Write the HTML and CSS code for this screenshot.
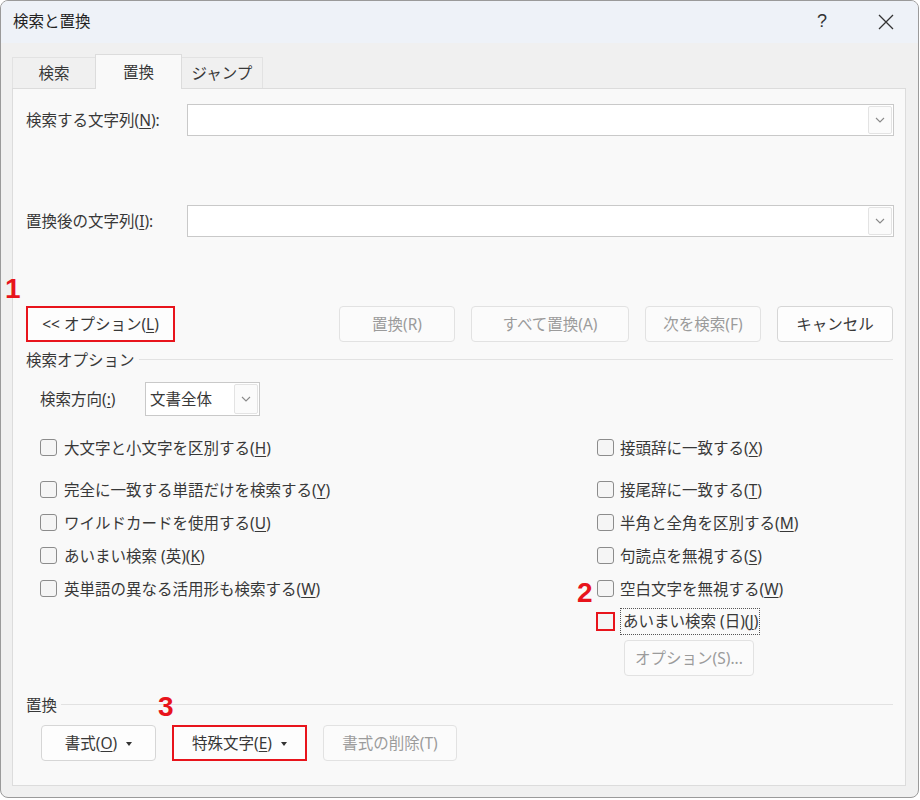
FILE: index.html
```html
<!DOCTYPE html>
<html lang="ja">
<head>
<meta charset="utf-8">
<title>検索と置換</title>
<link rel="stylesheet" href="styles.css">
</head>
<body>
<div class="window">
  <div class="titlebar">
    <span class="title">検索と置換</span>
    <div class="title-actions">
      <span class="help">?</span>
      <svg class="close" width="18" height="18" viewBox="0 0 18 18"><path d="M2 2L16 16M16 2L2 16"/></svg>
    </div>
  </div>
  <div class="tabs">
    <div class="tab tab-1">検索</div>
    <div class="tab tab-2 active">置換</div>
    <div class="tab tab-3">ジャンプ</div>
  </div>
  <div class="panel">
    <div class="field-row">
      <span class="field-label">検索する文字列(<u>N</u>):</span>
      <div class="combo">
        <div class="combo-btn"><svg width="10" height="6" viewBox="0 0 10 6"><path d="M1 1L5 5L9 1"/></svg></div>
      </div>
    </div>
    <div class="field-row row-gap">
      <span class="field-label">置換後の文字列(<u>I</u>):</span>
      <div class="combo">
        <div class="combo-btn"><svg width="10" height="6" viewBox="0 0 10 6"><path d="M1 1L5 5L9 1"/></svg></div>
      </div>
    </div>
    <div class="action-row">
      <button class="btn btn-options marked">&lt;&lt; オプション(<u>L</u>)</button>
      <div class="action-right">
        <button class="btn disabled w116">置換(R)</button>
        <button class="btn disabled w158">すべて置換(A)</button>
        <button class="btn disabled w116">次を検索(F)</button>
        <button class="btn w116">キャンセル</button>
      </div>
    </div>
    <div class="group-title group-options"><span>検索オプション</span><div class="rule"></div></div>
    <div class="dir-row">
      <span class="dir-label">検索方向(<u>:</u>)</span>
      <div class="select">
        <span class="select-text">文書全体</span>
        <div class="combo-btn small"><svg width="10" height="6" viewBox="0 0 10 6"><path d="M1 1L5 5L9 1"/></svg></div>
      </div>
    </div>
    <div class="checks">
      <div class="col col-left">
        <div class="check first"><span class="box"></span><span class="lbl">大文字と小文字を区別する(<u>H</u>)</span></div>
        <div class="check"><span class="box"></span><span class="lbl">完全に一致する単語だけを検索する(<u>Y</u>)</span></div>
        <div class="check"><span class="box"></span><span class="lbl">ワイルドカードを使用する(<u>U</u>)</span></div>
        <div class="check"><span class="box"></span><span class="lbl">あいまい検索 (英)(<u>K</u>)</span></div>
        <div class="check"><span class="box"></span><span class="lbl">英単語の異なる活用形も検索する(<u>W</u>)</span></div>
      </div>
      <div class="col col-right">
        <div class="check first"><span class="box"></span><span class="lbl">接頭辞に一致する(<u>X</u>)</span></div>
        <div class="check"><span class="box"></span><span class="lbl">接尾辞に一致する(<u>T</u>)</span></div>
        <div class="check"><span class="box"></span><span class="lbl">半角と全角を区別する(<u>M</u>)</span></div>
        <div class="check"><span class="box"></span><span class="lbl">句読点を無視する(<u>S</u>)</span></div>
        <div class="check"><span class="box"></span><span class="lbl">空白文字を無視する(<u>W</u>)</span></div>
        <div class="check"><span class="box marked-box"></span><span class="lbl focus">あいまい検索 (日)(<u>J</u>)</span></div>
        <button class="btn disabled sub-btn">オプション(S)...</button>
      </div>
    </div>
    <div class="group-title group-replace"><span>置換</span><div class="rule"></div></div>
    <div class="bottom-row">
      <button class="btn w115">書式(<u>O</u>)<span class="caret"></span></button>
      <button class="btn w135 marked">特殊文字(<u>E</u>)<span class="caret"></span></button>
      <button class="btn disabled w134">書式の削除(T)</button>
    </div>
  </div>
</div>
<span class="anno anno-1">1</span>
<span class="anno anno-2">2</span>
<span class="anno anno-3">3</span>
</body>
</html>
```

FILE: styles.css
```css
* { box-sizing: border-box; }

html, body {
  margin: 0;
  padding: 0;
  background: #ffffff;
}

body {
  position: relative;
  width: 920px;
  height: 800px;
  font-family: "Noto Sans", "Noto Sans CJK JP", sans-serif;
  font-size: 15.5px;
  color: #383838;
}

u { text-decoration: underline; text-underline-offset: 2px; text-decoration-thickness: 1px; }

.window {
  width: 919px;
  height: 798px;
  border: 1px solid #9a9a9a;
  border-radius: 8px;
  background: #f0f0f0;
  overflow: hidden;
}

.titlebar {
  height: 42px;
  background: #eef2f8;
  display: flex;
  align-items: center;
  justify-content: space-between;
  padding-left: 12px;
  padding-right: 23px;
}

.title {
  font-size: 15.5px;
  line-height: 20px;
  color: #222;
  margin-top: -2px;
}

.title-actions {
  display: flex;
  align-items: center;
  gap: 50px;
}

.help {
  font-family: "Liberation Sans", sans-serif;
  font-size: 18px;
  color: #333;
  margin-top: -2px;
}

.close path {
  stroke: #333;
  stroke-width: 1.3;
  fill: none;
}

.tabs {
  display: flex;
  align-items: flex-end;
  margin-top: 11px;
  padding-left: 11px;
  height: 34px;
}

.tab {
  height: 31px;
  display: flex;
  align-items: center;
  justify-content: center;
  background: #f0f0f0;
  border: 1px solid #e2e2e2;
  border-bottom: none;
  font-size: 15.5px;
  line-height: 20px;
}

.tab-1 { width: 83px; border-right: none; }
.tab-2 { width: 87px; }
.tab-3 { width: 81px; border-left: none; }

.tab.active {
  height: 35px;
  background: #f9f9f9;
  border-color: #dcdcdc;
  position: relative;
  z-index: 2;
  margin-bottom: -1px;
  padding-bottom: 1px;
}

.panel {
  position: relative;
  margin-left: 11px;
  width: 894px;
  height: 698px;
  border: 1px solid #dcdcdc;
  background: #f9f9f9;
  padding: 15px 11px 0 13px;
}

.field-row {
  display: flex;
  align-items: center;
  height: 32px;
}

.row-gap { margin-top: 69px; }

.field-label {
  width: 161px;
  line-height: 20px;
}

.combo {
  flex: 1;
  height: 32px;
  background: #ffffff;
  border: 1px solid #c9c9c9;
  display: flex;
  justify-content: flex-end;
  align-items: center;
  padding-right: 1px;
}

.combo-btn {
  width: 24px;
  height: 28px;
  border: 1px solid #e3e3e3;
  border-radius: 2px;
  background: #fbfbfb;
  display: flex;
  align-items: center;
  justify-content: center;
}

.combo-btn path {
  stroke: #8a8a8a;
  stroke-width: 1.1;
  fill: none;
}

.combo-btn.small { height: 30px; }

.action-row {
  margin-top: 69px;
  display: flex;
  justify-content: space-between;
  padding-right: 1px;
}

.action-right {
  display: flex;
  gap: 16px;
}

.btn {
  height: 36px;
  font-family: inherit;
  font-size: 15.5px;
  line-height: 20px;
  color: #383838;
  background: #fdfdfd;
  border: 1px solid #d6d6d6;
  border-radius: 4px;
  padding: 0;
  display: flex;
  align-items: center;
  justify-content: center;
}

.btn.disabled {
  color: #9b9b9b;
  background: #fbfbfb;
  border-color: #e2e2e2;
}

.btn.marked {
  border: 2px solid #e8141c;
  border-radius: 0;
}

.btn-options { width: 149px; }
.w115 { width: 115px; }
.w116 { width: 116px; }
.w134 { width: 134px; }
.w135 { width: 135px; }
.w158 { width: 158px; }

.group-title {
  display: flex;
  align-items: center;
  line-height: 20px;
  height: 20px;
  padding-right: 1px;
}

.group-title .rule {
  flex: 1;
  height: 1px;
  background: #e2e2e2;
  margin-left: 4px;
  margin-top: -2px;
}

.group-options { margin-top: 8px; }
.group-replace { margin-top: 19px; }

.dir-row {
  margin-top: 12px;
  padding-left: 14px;
  display: flex;
  align-items: center;
  height: 34px;
}

.dir-label {
  width: 105px;
  line-height: 20px;
}

.select {
  width: 115px;
  height: 34px;
  background: #ffffff;
  border: 1px solid #c9c9c9;
  display: flex;
  align-items: center;
  justify-content: space-between;
  padding-left: 4px;
  padding-right: 1px;
}

.select-text { line-height: 20px; }

.checks {
  margin-top: 15px;
  padding-left: 14px;
  display: flex;
}

.col {
  display: flex;
  flex-direction: column;
}

.col-left { width: 557px; }

.check {
  height: 33px;
  display: flex;
  align-items: center;
}

.check.first { margin-bottom: 9px; }

.box {
  width: 17px;
  height: 17px;
  border: 1px solid #8c8c8c;
  border-radius: 3px;
  background: #f5f5f5;
  flex: none;
}

.col-left .box { margin-right: 7px; }
.col-right .box { margin-right: 6px; }

.box.marked-box {
  border: 2px solid #e8141c;
  border-radius: 0;
  width: 19px;
  height: 19px;
  margin-left: -1px;
}

.lbl { line-height: 20px; }

.lbl.focus {
  outline: 1px dotted #555;
  outline-offset: 0;
  padding: 2px 1px 2px 2px;
  line-height: 21px;
}

.sub-btn {
  width: 130px;
  margin-top: 2px;
  margin-left: 27px;
}

.bottom-row {
  margin-top: 10px;
  padding-left: 15px;
  display: flex;
  gap: 16px;
}

.caret {
  display: inline-block;
  width: 0;
  height: 0;
  border-left: 3px solid transparent;
  border-right: 3px solid transparent;
  border-top: 4px solid #333;
  margin-left: 9px;
  margin-top: 1px;
}

.anno {
  position: absolute;
  font-family: "Liberation Sans", Arial, sans-serif;
  font-weight: bold;
  font-size: 28px;
  line-height: 28px;
  color: #e8141c;
}

.anno-1 { left: 5px; top: 275px; }
.anno-2 { left: 577px; top: 579px; }
.anno-3 { left: 158px; top: 693px; }
```
